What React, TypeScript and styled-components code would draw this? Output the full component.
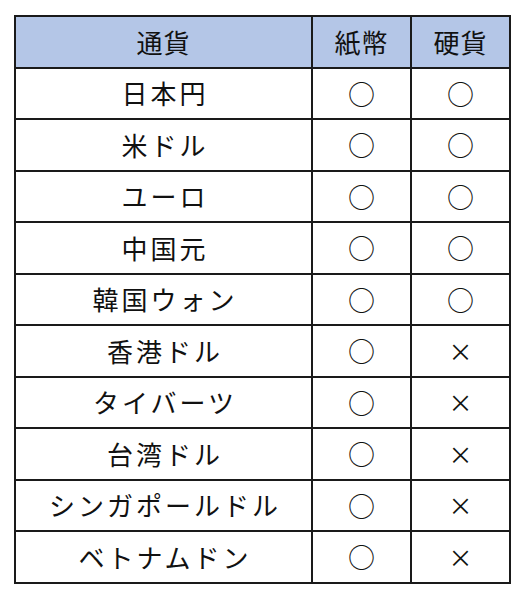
import styled, { createGlobalStyle } from "styled-components";

const GlobalStyle = createGlobalStyle`
  html, body {
    margin: 0;
    padding: 0;
    background: #ffffff;
  }
  body {
    font-family: "Noto Sans CJK JP", "Liberation Sans", sans-serif;
    color: #111;
  }
`;

const Page = styled.div`
  padding: 15px 0 0 14px;
`;

const Table = styled.table`
  border-collapse: collapse;
  table-layout: fixed;
  border: 2px solid #1a1a1a;
`;

const HeadCell = styled.th<{ $w: number }>`
  width: ${({ $w }) => $w}px;
  height: 49.5px;
  padding: 0;
  background: #b4c6e7;
  border: 2px solid #1a1a1a;
  font-weight: 400;
  font-size: 26px;
  line-height: 1;
  text-align: center;
  letter-spacing: 1px;
`;

const Cell = styled.td`
  height: 49.5px;
  padding: 0;
  border: 2px solid #1a1a1a;
  font-size: 26px;
  line-height: 1;
  text-align: center;
  letter-spacing: 3px;
  text-indent: 3px;
`;

const Mark = styled.td<{ $cross?: boolean }>`
  height: 49.5px;
  padding: 0;
  border: 2px solid #1a1a1a;
  font-size: ${({ $cross }) => ($cross ? "24px" : "27px")};
  line-height: 1;
  text-align: center;
`;

const rows: [string, boolean, boolean][] = [
  ["日本円", true, true],
  ["米ドル", true, true],
  ["ユーロ", true, true],
  ["中国元", true, true],
  ["韓国ウォン", true, true],
  ["香港ドル", true, false],
  ["タイバーツ", true, false],
  ["台湾ドル", true, false],
  ["シンガポールドル", true, false],
  ["ベトナムドン", true, false],
];

export default function App() {
  return (
    <>
      <GlobalStyle />
      <Page>
        <Table>
          <thead>
            <tr>
              <HeadCell $w={295}>通貨</HeadCell>
              <HeadCell $w={97}>紙幣</HeadCell>
              <HeadCell $w={97}>硬貨</HeadCell>
            </tr>
          </thead>
          <tbody>
            {rows.map(([name, bill, coin]) => (
              <tr key={name}>
                <Cell>{name}</Cell>
                <Mark $cross={!bill}>{bill ? "○" : "×"}</Mark>
                <Mark $cross={!coin}>{coin ? "○" : "×"}</Mark>
              </tr>
            ))}
          </tbody>
        </Table>
      </Page>
    </>
  );
}
